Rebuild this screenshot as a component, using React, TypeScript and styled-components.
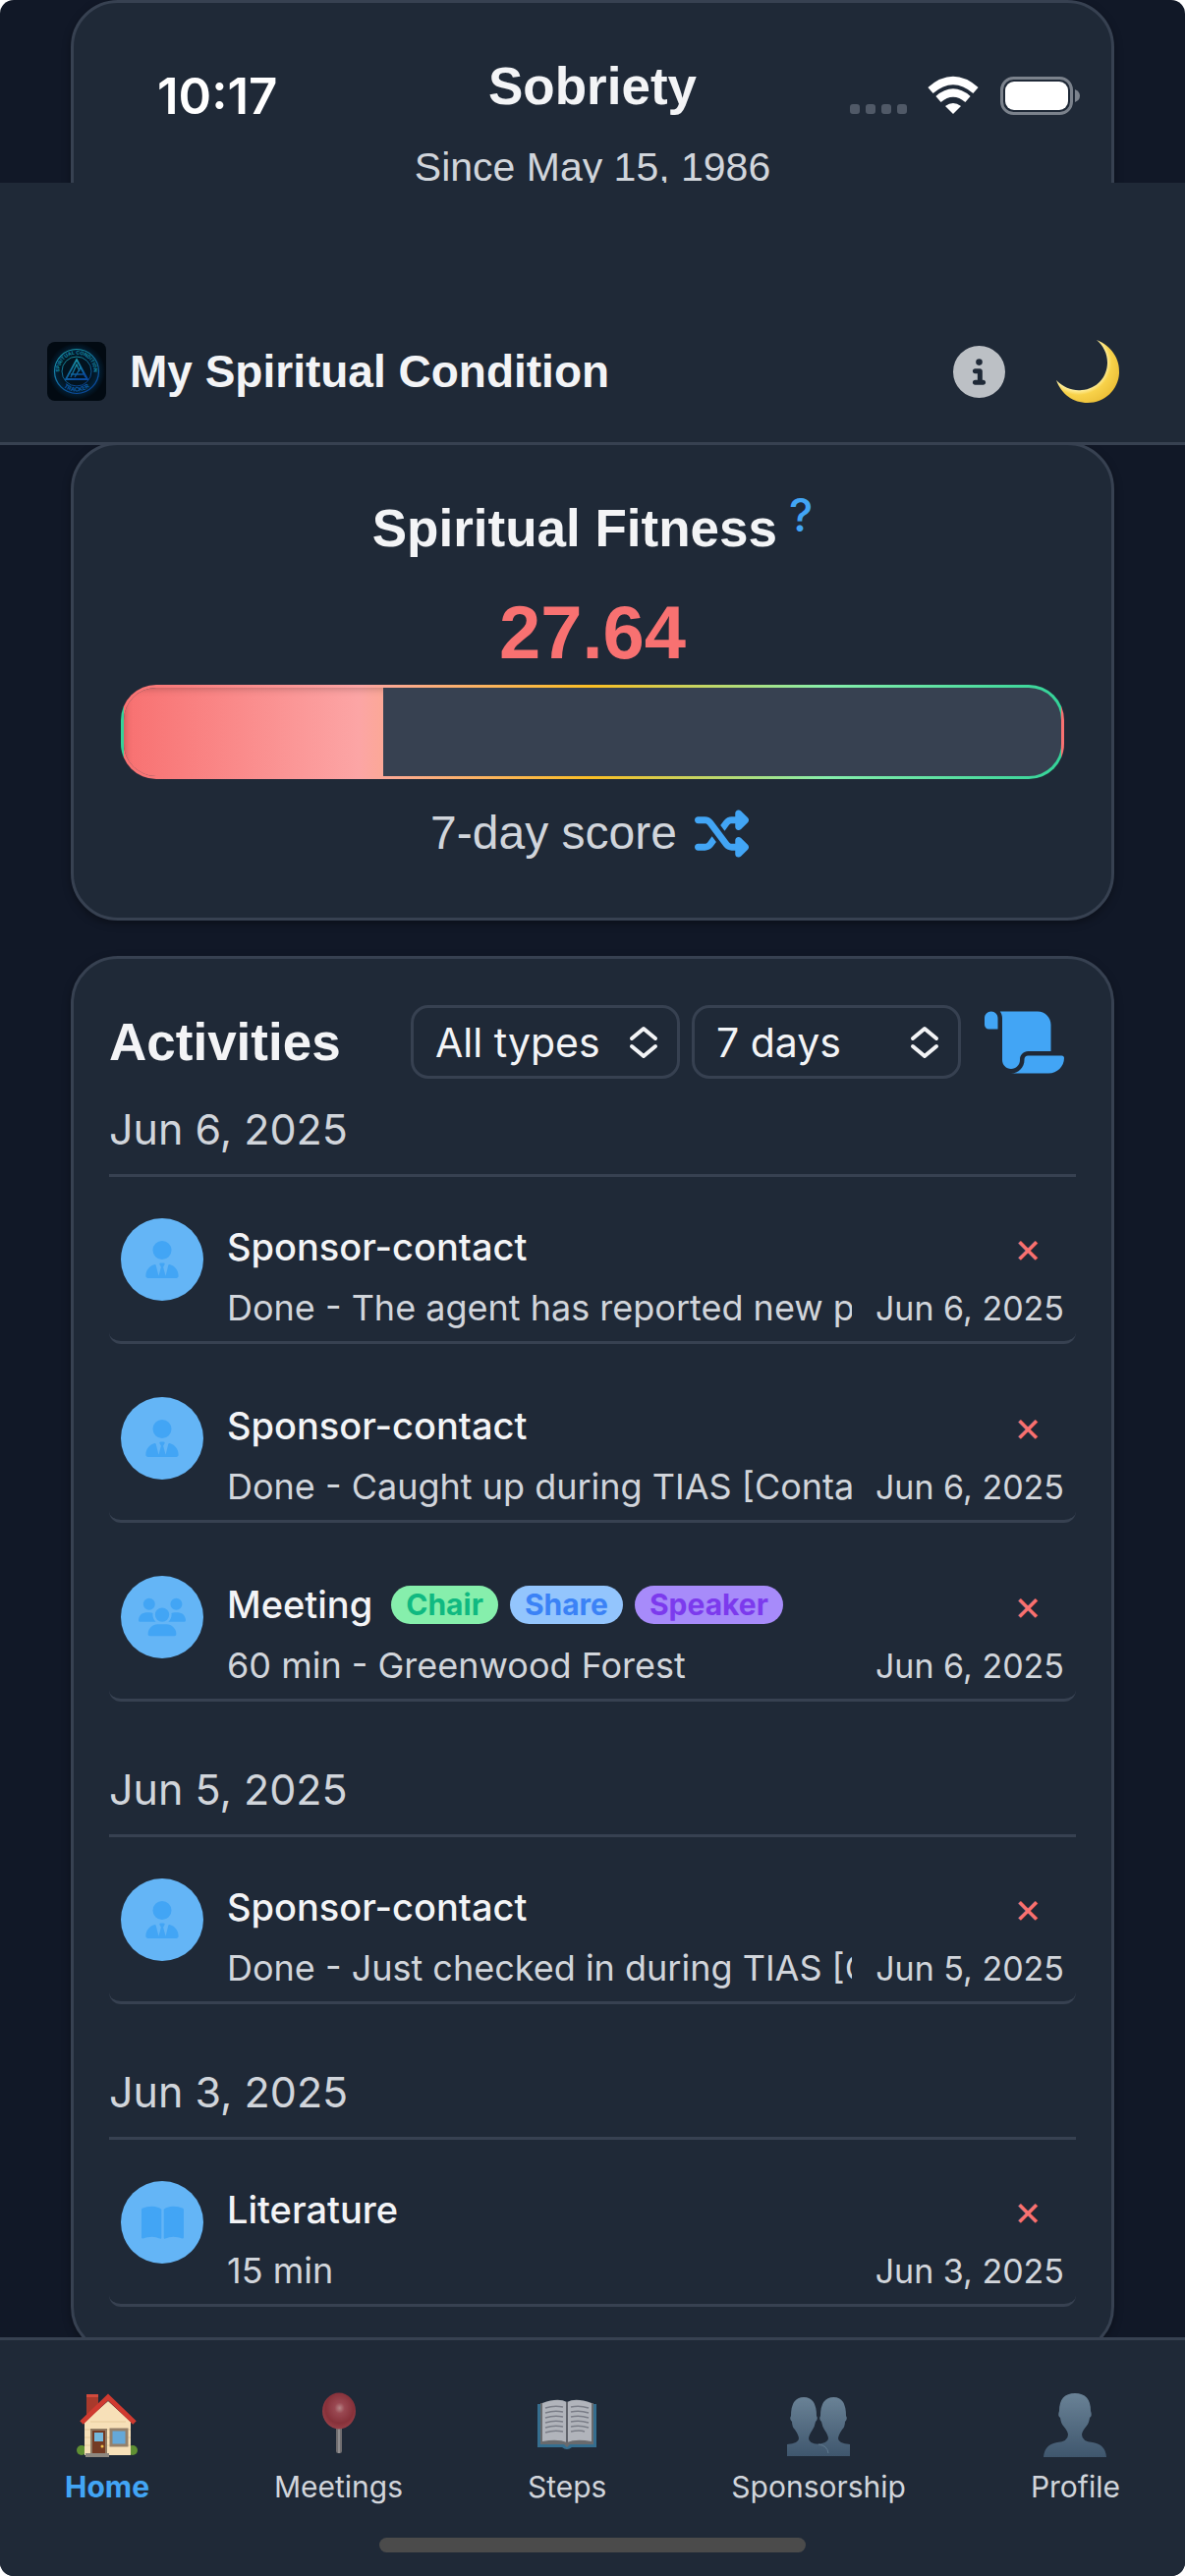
import React from 'react';
import styled, { createGlobalStyle } from 'styled-components';
import { FaBookOpen, FaCircleInfo, FaScroll, FaShuffle, FaUserTie, FaUsers } from 'react-icons/fa6';

const colors = {
  page: '#111827',
  panel: '#1f2937',
  line: '#374151',
  text: '#f3f4f6',
  muted: '#d1d5db',
  blue: '#42a5f5',
  circle: '#64b5f6',
  red: '#f87171',
};

const heading = '"Liberation Sans", Arial, sans-serif';
const body = 'Inter, "Liberation Sans", sans-serif';
const spectrum = 'linear-gradient(90deg, #f87171 0%, #fca5a5 25%, #fbbf24 50%, #86efac 75%, #34d399 100%)';

const GlobalStyle = createGlobalStyle`
  * { box-sizing: border-box; }
  body { margin: 0; background: #fff; font-family: ${body}; color: ${colors.text}; }
  h1, h2, h3, p, ul { margin: 0; padding: 0; }
  ul { list-style: none; }
  button { border: 0; padding: 0; background: none; font: inherit; color: inherit; cursor: pointer; }
`;

const Screen = styled.div`
  display: flex;
  flex-direction: column;
  height: 100vh;
  overflow: hidden;
  border-radius: 14px;
  background: ${colors.page};
`;

const Card = styled.section`
  margin: 0 72px;
  border: 3px solid ${colors.line};
  border-radius: 48px;
  background: ${colors.panel};
  box-shadow: 0 3px 9px rgba(0, 0, 0, 0.35);
`;

const TopArea = styled.div`
  position: relative;
  height: 186px;
  flex: none;
  overflow: hidden;
`;

const SobrietyCard = styled(Card)`
  height: 300px;
  padding-top: 55px;
  text-align: center;
`;

const CardTitle = styled.h2`
  font: 700 53px/60px ${heading};
`;

const Since = styled.p`
  margin-top: 28px;
  font: 400 41px/48px ${heading};
  color: ${colors.muted};
`;

const StatusBar = styled.div`
  position: absolute;
  inset: 66px 106px auto 160px;
  display: flex;
  align-items: center;
  justify-content: space-between;
  height: 64px;
`;

const Clock = styled.time`
  font-size: 51px;
  font-weight: 600;
  line-height: 64px;
  color: #fff;
`;

const Header = styled.header`
  display: flex;
  flex: none;
  align-items: center;
  gap: 24px;
  padding: 159px 66px 39px 48px;
  border-bottom: 3px solid ${colors.line};
  background: ${colors.panel};
`;

const AppTitle = styled.h1`
  flex: 1;
  font: 700 46px/66px ${heading};
`;

const InfoButton = styled.button`
  display: flex;
  margin-right: 27px;
  font-size: 53px;
  color: #bcc0c5;
`;

const MoonButton = styled.button`
  display: flex;
`;

const Main = styled.main`
  display: flex;
  flex: 1;
  flex-direction: column;
  gap: 36px;
  min-height: 0;
  overflow: hidden;
  & > * { flex: none; }
`;

const FitnessCard = styled(Card)`
  display: flex;
  flex-direction: column;
  align-items: center;
  margin-top: -3px;
  padding: 55px 48px 58px;
`;

const TitleRow = styled.div`
  display: flex;
  gap: 12px;
`;

const HelpButton = styled.button`
  height: 32px;
  font-size: 46px;
  font-weight: 500;
  line-height: 32px;
  color: ${colors.blue};
`;

const Score = styled.output`
  margin: 32px 0 9px;
  font: 700 76px/88px ${heading};
  color: ${colors.red};
`;

const Meter = styled.div`
  align-self: stretch;
  height: 96px;
  overflow: hidden;
  border: 3px solid transparent;
  border-radius: 36px;
  background: linear-gradient(${colors.line}, ${colors.line}) padding-box, ${spectrum};
`;

const MeterFill = styled.div`
  height: 100%;
  background-image: ${spectrum};
  box-shadow: inset 6px 6px 9px -6px rgba(0, 0, 0, 0.3);
`;

const Period = styled.div`
  display: flex;
  align-items: center;
  gap: 18px;
  margin-top: 27px;
  font: 400 48px/56px ${heading};
  color: ${colors.muted};
`;

const ShuffleButton = styled.button`
  display: flex;
  padding-right: 6px;
  font-size: 55px;
  color: ${colors.blue};
`;

const ActivitiesCard = styled(Card)`
  padding: 47px 36px 45px;
`;

const Toolbar = styled.div`
  display: flex;
  align-items: center;
  gap: 12px;
  margin-bottom: 25px;
  padding-right: 12px;
  & > h2 { flex: 1; }
`;

const SelectBox = styled.label`
  position: relative;
  display: block;
  width: 274px;
  svg { position: absolute; right: 22px; top: 21px; pointer-events: none; }
`;

const Select = styled.select`
  display: block;
  width: 100%;
  height: 75px;
  padding: 0 22px;
  border: 3px solid ${colors.line};
  border-radius: 18px;
  background: transparent;
  appearance: none;
  font: 400 41px/48px ${body};
  color: ${colors.text};
`;

const ScrollButton = styled.button`
  display: flex;
  margin-left: 12px;
  color: ${colors.blue};
  svg { width: 81px; height: 72px; }
`;

const Group = styled.section`
  & + & { margin-top: 63px; }
`;

const GroupDate = styled.h3`
  margin-bottom: 24px;
  padding-bottom: 20px;
  border-bottom: 3px solid ${colors.line};
  font-size: 43px;
  font-weight: 400;
  line-height: 52px;
  color: ${colors.muted};
`;

const List = styled.ul`
  display: grid;
  gap: 36px;
`;

const Item = styled.li`
  display: flex;
  gap: 24px;
  padding: 18px 12px 12px;
  border-bottom: 3px solid ${colors.line};
  border-radius: 12px;
`;

const TypeIcon = styled.span`
  display: grid;
  place-items: center;
  flex: none;
  width: 84px;
  height: 84px;
  border-radius: 50%;
  background: ${colors.circle};
  color: ${colors.blue};
`;

const ItemBody = styled.div`
  flex: 1;
  min-width: 0;
  padding-top: 5px;
`;

const ItemTop = styled.div`
  display: flex;
  align-items: center;
  gap: 12px;
  height: 48px;
`;

const ItemName = styled.span`
  margin-right: 7px;
  font-size: 38px;
  font-weight: 500;
  line-height: 48px;
`;

const Badge = styled.span<{ $bg: string; $fg: string }>`
  padding: 0 15px;
  border-radius: 20px;
  background: ${(p) => p.$bg};
  color: ${(p) => p.$fg};
  font-size: 30px;
  font-weight: 700;
  line-height: 39px;
`;

const DeleteButton = styled.button`
  width: 74px;
  height: 48px;
  margin-left: auto;
  font-size: 43px;
  line-height: 48px;
  color: ${colors.red};
`;

const ItemBottom = styled.div`
  display: flex;
  align-items: baseline;
  gap: 24px;
  height: 44px;
  margin-top: 16px;
  line-height: 44px;
  color: ${colors.muted};
`;

const Description = styled.p`
  flex: 1;
  overflow: hidden;
  font-size: 36px;
  white-space: nowrap;
`;

const ItemDate = styled.time`
  font-size: 34px;
`;

const BottomBar = styled.footer`
  flex: none;
  border-top: 3px solid ${colors.line};
  background: ${colors.panel};
`;

const Nav = styled.nav`
  display: flex;
  justify-content: space-between;
  padding: 53px 66px 0;
`;

const NavLink = styled.a<{ $active?: boolean }>`
  display: flex;
  flex-direction: column;
  align-items: center;
  gap: 10px;
  font-size: 30px;
  font-weight: ${(p) => (p.$active ? 700 : 400)};
  line-height: 40px;
  text-decoration: none;
  color: ${(p) => (p.$active ? colors.blue : colors.muted)};
  svg { opacity: ${(p) => (p.$active ? 1 : 0.75)}; }
`;

const HomeIndicator = styled.div`
  width: 36%;
  height: 15px;
  margin: 32px auto 24px;
  border-radius: 8px;
  background: #4b4b4b;
`;

const StatusIcons = () => (
  <svg width="236" height="42" viewBox="0 0 236 42" aria-hidden="true">
    <g fill="#505967">
      {[1, 17, 33, 49].map((x) => (
        <rect key={x} x={x} y="29" width="10" height="10" rx="3" />
      ))}
    </g>
    <g fill="none" stroke="#fff" strokeWidth="8">
      <path d="M83 15 Q106 -5 129 15" />
      <path d="M91 24 Q106 11 121 24" />
    </g>
    <path d="M98 31 Q106 25 114 31 L106 39 Z" fill="#fff" />
    <rect x="155.500" y="2.500" width="71" height="36" rx="12" fill="none" stroke="#7b828c" strokeWidth="3" />
    <rect x="159" y="6" width="64" height="29" rx="9" fill="#fff" />
    <path d="M230 14 Q235 16 235 20.500 Q235 25 230 27 Z" fill="#7b828c" />
  </svg>
);

const Logo = () => (
  <svg width="60" height="60" viewBox="0 0 60 60" role="img" aria-label="Spiritual Condition Tracker">
    <defs>
      <linearGradient id="logo-ink" x1="0" y1="0" x2="0.500" y2="1">
        <stop offset="0" stopColor="#1ba3a8" />
        <stop offset="1" stopColor="#0a4a9c" />
      </linearGradient>
      <radialGradient id="logo-glow">
        <stop offset="0.500" stopColor="#02131f" />
        <stop offset="0.750" stopColor="#032036" />
        <stop offset="1" stopColor="#020a12" />
      </radialGradient>
      <path id="logo-top" d="M12.500 30 A17.500 17.500 0 0 1 47.500 30" />
      <path id="logo-bottom" d="M9.500 30 A20.500 20.500 0 0 0 50.500 30" />
    </defs>
    <rect width="60" height="60" rx="8" fill="#020a12" />
    <circle cx="30" cy="30" r="29" fill="url(#logo-glow)" />
    <g fill="none" stroke="url(#logo-ink)">
      <circle cx="30" cy="30" r="22.500" strokeWidth="1.200" />
      <circle cx="30" cy="30" r="15" strokeWidth="0.900" />
      <path d="M30 18 L41 38 H19 Z" strokeWidth="1.800" />
      <path d="M24 36 L30 23 L33 30 M28 36 L34 26 L39 36 M24 33 H37" strokeWidth="1.300" />
    </g>
    <g fill="#138aa6" fontFamily="Inter, sans-serif" fontWeight="700">
      <text fontSize="5">
        <textPath href="#logo-top" startOffset="50%" textAnchor="middle">SPIRITUAL CONDITION</textPath>
      </text>
      <text fontSize="6" fill="#0d5da8">
        <textPath href="#logo-bottom" startOffset="50%" textAnchor="middle">TRACKER</textPath>
      </text>
    </g>
  </svg>
);

const Moon = () => (
  <svg width="66" height="66" viewBox="4 3 66 66" aria-hidden="true">
    <defs>
      <radialGradient id="moon" cx="0.350" cy="0.350" r="0.750">
        <stop offset="0.600" stopColor="#fff0a0" />
        <stop offset="0.700" stopColor="#f8d24a" />
        <stop offset="0.900" stopColor="#eec33c" />
        <stop offset="1" stopColor="#f3bd22" />
      </radialGradient>
    </defs>
    <path d="M46 4 C61 10 70 23 69 38 C68 55 54 68 37 68 C22 68 10 59 5 45 C13 53 22 56 31 55 C46 54 57 42 57 27 C57 18 53 10 46 4 Z" fill="url(#moon)" />
  </svg>
);

const Chevrons = () => (
  <svg width="30" height="34" viewBox="0 0 30 34" fill="none" stroke="#f3f4f6" strokeWidth="4" strokeLinecap="round" strokeLinejoin="round" aria-hidden="true">
    <path d="M3 13 L15 3 L27 13 M3 21 L15 31 L27 21" />
  </svg>
);

const HouseIcon = () => (
  <svg width="66" height="66" viewBox="0 0 66 66" aria-hidden="true">
    <rect x="12" y="2" width="12" height="24" fill="#a83a2c" />
    <path d="M12 2 H24 V5 H12 Z" fill="#d24a3c" />
    <circle cx="7" cy="59" r="5" fill="#5f8f33" />
    <circle cx="59" cy="59" r="5" fill="#5f8f33" />
    <path d="M10 30 L34 9 L57 30 V64 H10 Z" fill="#f7e0b8" />
    <path d="M10 38 H57 M10 46 H57 M10 54 H57 M16 30 H52" stroke="#e6cb9c" strokeWidth="1" />
    <path d="M7 31 L34 5 L61 31" fill="none" stroke="#cf3a30" strokeWidth="5" />
    <rect x="17" y="38" width="15" height="25" fill="#743a24" stroke="#8f7a63" strokeWidth="2" />
    <rect x="20" y="41" width="9" height="9" fill="#74b8dd" />
    <circle cx="28" cy="55" r="1.500" fill="#f2c14e" />
    <rect x="37" y="38" width="16" height="16" fill="#65a8d8" stroke="#94806a" strokeWidth="3" />
    <rect x="11" y="62" width="24" height="4" fill="#8e8880" />
  </svg>
);

const PinIcon = () => (
  <svg width="66" height="66" viewBox="0 0 66 66" aria-hidden="true">
    <defs>
      <radialGradient id="pin" cx="0.520" cy="0.420" r="0.600">
        <stop offset="0" stopColor="#e8a5a2" />
        <stop offset="0.250" stopColor="#c2525a" />
        <stop offset="0.700" stopColor="#a9343b" />
        <stop offset="1" stopColor="#c44a50" />
      </radialGradient>
    </defs>
    <rect x="30" y="34" width="6" height="28" rx="2" fill="#8b8583" />
    <rect x="32" y="34" width="2" height="28" fill="#b3adab" />
    <ellipse cx="33" cy="19" rx="17" ry="18.500" fill="url(#pin)" />
  </svg>
);

const BookIcon = () => (
  <svg width="66" height="66" viewBox="0 0 66 66" aria-hidden="true">
    <path d="M3 12 H63 V56 H38 Q33 60 28 56 H3 Z" fill="#3d85ad" />
    <path d="M6 11 V53 H30 L33 56 L36 53 H60 V11 Z" fill="#81807f" />
    <path d="M8 11 Q24 5 33 10 Q42 5 58 11 V50 Q42 47 33 51 Q24 47 8 50 Z" fill="#e2e3e8" />
    <path d="M33 10 V51" stroke="#75767c" strokeWidth="2" />
    <path d="M11 16 Q20 13 29 15 M11 21 Q20 18 29 20 M11 26 Q20 23 29 25 M11 31 Q20 28 29 30 M11 36 Q20 33 29 35 M11 41 Q20 38 29 40 M37 15 Q46 13 55 16 M37 20 Q46 18 55 21 M37 25 Q46 23 55 26 M37 30 Q46 28 55 31 M37 35 Q46 33 55 36 M37 40 Q46 38 51 40" fill="none" stroke="#9a9ba3" strokeWidth="1.500" />
  </svg>
);

const BustGradient = ({ id }: { id: string }) => (
  <linearGradient id={id} x1="0" y1="0" x2="0" y2="1">
    <stop offset="0" stopColor="#83a0b6" />
    <stop offset="1" stopColor="#4a6680" />
  </linearGradient>
);

const PeopleIcon = () => (
  <svg width="66" height="66" viewBox="0 0 66 66" aria-hidden="true">
    <defs><BustGradient id="bust-pair" /></defs>
    <g fill="url(#bust-pair)">
      <path d="M30 65 V53 Q43 52 43 47 Q43 44 39 38 Q37 35 36 30 Q33 27 35 24 Q35 5 48.500 5 Q61 5 61 24 Q63 27 60 30 Q60 35 57 38 Q53 44 53 47 Q53 52 65 53 V65 Z" />
      <path d="M1 65 V53 Q13 52 13 47 Q13 44 9 38 Q6 35 6 30 Q3 27 5 24 Q5 5 18 5 Q31 5 31 24 Q33 27 30 30 Q29 35 27 38 Q23 44 23 47 Q23 52 33 53 Q42 54 43 62 V65 Z" />
    </g>
    <path d="M33 53 Q42 54 43 62" fill="none" stroke="#7594ab" strokeWidth="1" />
  </svg>
);

const PersonIcon = () => (
  <svg width="66" height="66" viewBox="0 0 66 66" aria-hidden="true">
    <defs><BustGradient id="bust-single" /></defs>
    <path d="M1 66 Q2 53 15 51 Q26 50 26 43 Q26 40 21 34 Q19 32 18 26 Q15 24 17 19 Q17 1 33 1 Q49 1 49 19 Q51 24 48 26 Q47 32 45 34 Q40 40 40 43 Q40 50 51 51 Q64 53 65 66 Z" fill="url(#bust-single)" />
  </svg>
);

type Activity = {
  kind: 'contact' | 'meeting' | 'reading';
  name: string;
  detail: string;
  badges?: string[];
};

const groups: { date: string; items: Activity[] }[] = [
  {
    date: 'Jun 6, 2025',
    items: [
      { kind: 'contact', name: 'Sponsor-contact', detail: 'Done - The agent has reported new p' },
      { kind: 'contact', name: 'Sponsor-contact', detail: 'Done - Caught up during TIAS [Conta' },
      { kind: 'meeting', name: 'Meeting', detail: '60 min - Greenwood Forest', badges: ['Chair', 'Share', 'Speaker'] },
    ],
  },
  {
    date: 'Jun 5, 2025',
    items: [{ kind: 'contact', name: 'Sponsor-contact', detail: 'Done - Just checked in during TIAS [C' }],
  },
  {
    date: 'Jun 3, 2025',
    items: [{ kind: 'reading', name: 'Literature', detail: '15 min' }],
  },
];

const kindIcons = {
  contact: <FaUserTie size={38} />,
  meeting: <FaUsers size={48} />,
  reading: <FaBookOpen size={43} />,
};

const badgeColors: Record<string, [string, string]> = {
  Chair: ['#86efac', '#10b981'],
  Share: ['#93c5fd', '#3b82f6'],
  Speaker: ['#a78bfa', '#7c3aed'],
};

const tabs = [
  { label: 'Home', icon: <HouseIcon />, active: true },
  { label: 'Meetings', icon: <PinIcon /> },
  { label: 'Steps', icon: <BookIcon /> },
  { label: 'Sponsorship', icon: <PeopleIcon /> },
  { label: 'Profile', icon: <PersonIcon /> },
];

const score = 27.64;

function ActivityRow({ item, date }: { item: Activity; date: string }) {
  return (
    <Item>
      <TypeIcon>{kindIcons[item.kind]}</TypeIcon>
      <ItemBody>
        <ItemTop>
          <ItemName>{item.name}</ItemName>
          {item.badges?.map((b) => (
            <Badge key={b} $bg={badgeColors[b][0]} $fg={badgeColors[b][1]}>{b}</Badge>
          ))}
          <DeleteButton aria-label="Delete activity">×</DeleteButton>
        </ItemTop>
        <ItemBottom>
          <Description>{item.detail}</Description>
          <ItemDate>{date}</ItemDate>
        </ItemBottom>
      </ItemBody>
    </Item>
  );
}

export default function App() {
  return (
    <>
      <GlobalStyle />
      <Screen>
        <TopArea>
          <SobrietyCard>
            <CardTitle>Sobriety</CardTitle>
            <Since>Since May 15, 1986</Since>
          </SobrietyCard>
          <StatusBar>
            <Clock>10:17</Clock>
            <StatusIcons />
          </StatusBar>
        </TopArea>
        <Header>
          <Logo />
          <AppTitle>My Spiritual Condition</AppTitle>
          <InfoButton aria-label="About"><FaCircleInfo /></InfoButton>
          <MoonButton aria-label="Toggle theme"><Moon /></MoonButton>
        </Header>
        <Main>
          <FitnessCard>
            <TitleRow>
              <CardTitle>Spiritual Fitness</CardTitle>
              <HelpButton aria-label="About the score">?</HelpButton>
            </TitleRow>
            <Score>{score}</Score>
            <Meter>
              <MeterFill style={{ width: `${score}%`, backgroundSize: `${10000 / score}% 100%` }} />
            </Meter>
            <Period>
              7-day score
              <ShuffleButton aria-label="Change period"><FaShuffle /></ShuffleButton>
            </Period>
          </FitnessCard>
          <ActivitiesCard>
            <Toolbar>
              <CardTitle>Activities</CardTitle>
              <SelectBox>
                <Select aria-label="Activity type"><option>All types</option></Select>
                <Chevrons />
              </SelectBox>
              <SelectBox>
                <Select aria-label="Time range"><option>7 days</option></Select>
                <Chevrons />
              </SelectBox>
              <ScrollButton aria-label="Show log"><FaScroll /></ScrollButton>
            </Toolbar>
            {groups.map((g) => (
              <Group key={g.date}>
                <GroupDate>{g.date}</GroupDate>
                <List>
                  {g.items.map((item, i) => (
                    <ActivityRow key={i} item={item} date={g.date} />
                  ))}
                </List>
              </Group>
            ))}
          </ActivitiesCard>
        </Main>
        <BottomBar>
          <Nav>
            {tabs.map((t) => (
              <NavLink key={t.label} href="#" $active={t.active}>
                {t.icon}
                {t.label}
              </NavLink>
            ))}
          </Nav>
          <HomeIndicator />
        </BottomBar>
      </Screen>
    </>
  );
}
